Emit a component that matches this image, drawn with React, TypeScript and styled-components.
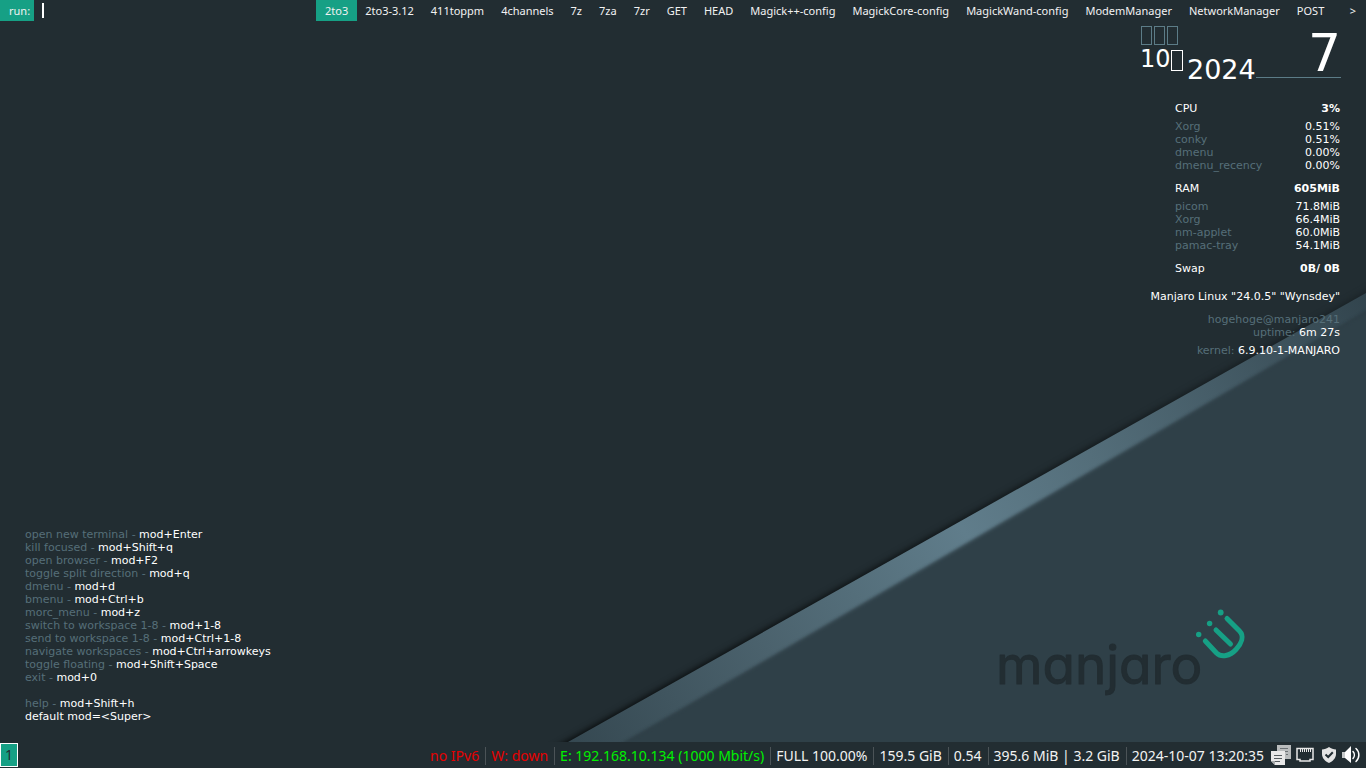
import React from "react";
import styled, { createGlobalStyle } from "styled-components";

const GlobalStyle = createGlobalStyle`
  * { box-sizing: border-box; }
  body {
    margin: 0;
    background: #222d32;
    color: #ffffff;
    font-family: "DejaVu Sans", sans-serif;
  }
`;

const Screen = styled.div`
  display: flex;
  flex-direction: column;
  min-height: 100vh;
  overflow: hidden;
`;

/* Launcher bar */
const Launcher = styled.form`
  position: relative;
  display: flex;
  height: 21px;
  background: #222d32;
  font: 11px/21px "Noto Sans", sans-serif;
  color: #f2f2f2;
`;

const Prompt = styled.label`
  width: 34px;
  padding-left: 9px;
  background: #16a085;
`;

const CommandInput = styled.input`
  width: 282px;
  padding: 0 7px;
  border: 0;
  outline: 0;
  background: transparent;
  color: inherit;
  font: inherit;
  caret-color: transparent;
`;

const Caret = styled.span`
  position: absolute;
  left: 42px;
  top: 3px;
  width: 2px;
  height: 15px;
  background: #ffffff;
`;

const Matches = styled.div`
  display: flex;
  flex: 1;
  overflow: hidden;
`;

const Match = styled.button<{ $active?: boolean }>`
  padding: 0 9px 0 ${(p) => (p.$active ? 9 : 8)}px;
  border: 0;
  background: ${(p) => (p.$active ? "#16a085" : "transparent")};
  color: inherit;
  font: inherit;
  white-space: nowrap;
`;

const More = styled(Match)`
  margin-left: auto;
  padding-right: 10px;
`;

/* Desktop */
const Desktop = styled.main`
  position: relative;
  flex: 1;
  display: flex;
  justify-content: space-between;
  padding: 5px 25px 19px;
  font-size: 11px;
  line-height: 13px;
`;

const Wallpaper = styled.svg`
  position: absolute;
  inset: 0;
  width: 100%;
  height: 100%;
`;

const Wordmark = styled.text`
  font: 400 53px Inter, sans-serif;
  font-feature-settings: "cv11";
  fill: #222d32;
  stroke: #222d32;
  stroke-width: 1px;
  stroke-linejoin: round;
`;

const Shortcuts = styled.ul`
  position: relative;
  align-self: flex-end;
  margin: 0;
  padding: 0;
  list-style: none;
`;

const Shortcut = styled.li<{ $spaced?: boolean }>`
  margin-top: ${(p) => (p.$spaced ? 13 : 0)}px;
  white-space: pre;
`;

const Dim = styled.span`
  color: #566f79;
`;

const Monitor = styled.aside`
  position: relative;
  width: 201px;
`;

const DateBlock = styled.header`
  display: flex;
  height: 52px;
  margin-bottom: 24px;
`;

const MonthColumn = styled.div`
  width: 47px;
`;

const Glyphs = styled.div`
  display: flex;
  gap: 2px;
  padding-left: 1px;
`;

const MissingGlyph = styled.span<{ $large?: boolean }>`
  width: ${(p) => (p.$large ? 12 : 11)}px;
  height: ${(p) => (p.$large ? 21 : 19)}px;
  border: 1px solid ${(p) => (p.$large ? "#ffffff" : "#5c7c87")};
`;

const Month = styled.div`
  display: flex;
  align-items: flex-end;
  margin-top: 2px;
  font-size: 24px;
  line-height: 24px;
`;

const Year = styled.span`
  align-self: flex-end;
  font-size: 27px;
  line-height: 28px;
  margin-bottom: -6px;
`;

const Day = styled.span`
  flex: 1;
  border-bottom: 1px solid #5c7c87;
  font-size: 52px;
  line-height: 54px;
  text-align: right;
`;

const Stats = styled.table`
  width: 166px;
  margin: 0 0 10px auto;
  padding-right: 1px;
  border-spacing: 0;

  th, td { padding: 0; }
  th { text-align: left; font-weight: 400; }
  td { text-align: right; }
  thead td { font-weight: 700; }
`;

const Heading = styled.tr<{ $rows: boolean }>`
  && > * { padding-bottom: ${(p) => (p.$rows ? 5 : 0)}px; }
`;

const Line = styled.div<{ $gap?: number }>`
  margin-top: ${(p) => p.$gap || 0}px;
  padding-right: 1px;
  text-align: right;
  white-space: nowrap;
`;

/* Status bar */
const StatusBar = styled.footer`
  position: relative;
  display: flex;
  align-items: center;
  height: 26px;
  background: #222d32;
  color: #f2f3f2;
  font: 14px/26px "Noto Sans", sans-serif;
`;

const Workspace = styled.button`
  width: 18px;
  height: 24px;
  padding: 0;
  border: 1px solid #ffffff;
  background: #16a085;
  color: #222d32;
  font: inherit;
  line-height: 22px;
`;

const Blocks = styled.div`
  display: flex;
  align-items: center;
  margin-left: auto;
  padding: 2px 1px 0 0;
  white-space: nowrap;
`;

const Block = styled.span<{ $color?: string }>`
  padding: 0 6px 0 5px;
  line-height: 18px;
  color: ${(p) => p.$color || "inherit"};
  & + & { border-left: 1px solid #4b5357; }
`;

const Tray = styled.div`
  display: flex;
  align-items: center;
  gap: 4px;
  padding-right: 5px;
`;

const matches = [
  "2to3", "2to3-3.12", "411toppm", "4channels", "7z", "7za", "7zr", "GET", "HEAD",
  "Magick++-config", "MagickCore-config", "MagickWand-config", "ModemManager",
  "NetworkManager", "POST",
];

const shortcuts = [
  ["open new terminal", "mod+Enter"],
  ["kill focused", "mod+Shift+q"],
  ["open browser", "mod+F2"],
  ["toggle split direction", "mod+q"],
  ["dmenu", "mod+d"],
  ["bmenu", "mod+Ctrl+b"],
  ["morc_menu", "mod+z"],
  ["switch to workspace 1-8", "mod+1-8"],
  ["send to workspace 1-8", "mod+Ctrl+1-8"],
  ["navigate workspaces", "mod+Ctrl+arrowkeys"],
  ["toggle floating", "mod+Shift+Space"],
  ["exit", "mod+0"],
  ["help", "mod+Shift+h"],
];

const stats = [
  { name: "CPU", value: "3%", rows: [["Xorg", "0.51%"], ["conky", "0.51%"], ["dmenu", "0.00%"], ["dmenu_recency", "0.00%"]] },
  { name: "RAM", value: "605MiB", rows: [["picom", "71.8MiB"], ["Xorg", "66.4MiB"], ["nm-applet", "60.0MiB"], ["pamac-tray", "54.1MiB"]] },
  { name: "Swap", value: "0B/ 0B", rows: [] },
];

const blocks = [
  { text: "no IPv6", color: "#e60000" },
  { text: "W: down", color: "#e60000" },
  { text: "E: 192.168.10.134 (1000 Mbit/s)", color: "#00f000" },
  { text: "FULL 100.00%" },
  { text: "159.5 GiB" },
  { text: "0.54" },
  { text: "395.6 MiB | 3.2 GiB" },
  { text: "2024-10-07 13:20:35" },
];

function Background() {
  return (
    <Wallpaper viewBox="0 21 1366 721" preserveAspectRatio="xMaxYMax slice">
      <defs>
        <linearGradient id="band" gradientUnits="userSpaceOnUse" x1="568" y1="742" x2="1366" y2="293">
          <stop offset="0" stopColor="#354851" />
          <stop offset="0.24" stopColor="#4b626d" />
          <stop offset="0.35" stopColor="#546e7a" />
          <stop offset="0.49" stopColor="#607d8b" />
          <stop offset="0.65" stopColor="#546e7a" />
          <stop offset="0.8" stopColor="#465d68" />
          <stop offset="1" stopColor="#32444d" />
        </linearGradient>
        <linearGradient id="shade" gradientUnits="userSpaceOnUse" x1="568" y1="742" x2="1366" y2="293">
          <stop offset="0" stopColor="#080b0c" />
          <stop offset="0.5" stopColor="#0e1315" />
          <stop offset="1" stopColor="#1a2226" />
        </linearGradient>
        <filter id="soft" x="-5%" y="-5%" width="110%" height="110%" colorInterpolationFilters="sRGB">
          <feGaussianBlur stdDeviation="3" />
        </filter>
        <filter id="edge" x="-5%" y="-5%" width="110%" height="110%" colorInterpolationFilters="sRGB">
          <feGaussianBlur stdDeviation="1.5" />
        </filter>
        <clipPath id="corner">
          <path d="M568 742 1366 293V742Z" />
        </clipPath>
      </defs>
      <path d="M0 0H1366V742H0Z" fill="#222d32" />
      <path d="M547 752 1384 281V310L585 760Z" fill="url(#shade)" filter="url(#soft)" />
      <path d="M568 742 1366 293V742Z" fill="url(#band)" />
      <g clipPath="url(#corner)">
        <path d="M617 746 1376 305V780H600Z" fill="#2a373e" opacity="0.6" filter="url(#edge)" />
        <path d="M621 746 1376 307V780H600Z" fill="#2f4048" filter="url(#edge)" />
      </g>
      <Wordmark x="996" y="684">manjaro</Wordmark>
      <g stroke="#16a085" strokeWidth="5" strokeLinecap="round" fill="none">
        <path d="M1227 618.5 1239.5 631C1244.500 636 1241.500 643.500 1236 649.500C1230 656 1221.500 658 1216.500 653L1205.300 641" />
        <path d="M1216 630 1230.500 644" />
      </g>
      <g fill="#16a085">
        <circle cx="1220.700" cy="612.500" r="2.900" />
        <circle cx="1209.600" cy="623.500" r="2.700" />
        <circle cx="1198.700" cy="634.500" r="2.700" />
      </g>
    </Wallpaper>
  );
}

function TrayIcons() {
  return (
    <Tray>
      <svg width="20" height="20" viewBox="0 0 20 20" aria-label="Clipboard">
        <path d="M6 0H20V14H6Z" fill="#b9bcbd" />
        <path d="M9 3.500H17M9 6.500H17M15 9.500H17" stroke="#6b7174" />
        <path d="M0 6H14V20H4L0 16Z" fill="#e8e8e8" />
        <path d="M3 10.500H11M3 13.500H11M3 16.500H9" stroke="#555c5f" />
        <path d="M0 16H4V20Z" fill="#a5a9aa" />
      </svg>
      <svg width="22" height="20" viewBox="0 0 22 20" aria-label="Wired network">
        <path d="M2 3.500H18V14.500H15V16H5V14.500H2Z" fill="none" stroke="#e8e8e8" strokeWidth="1.500" />
        <path d="M5.500 4V7M7.500 4V7M9.500 4V7M11.500 4V7M13.500 4V7M15.500 4V7" stroke="#e8e8e8" />
      </svg>
      <svg width="16" height="20" viewBox="0 0 16 20" aria-label="Updates">
        <path d="M8 2C10 3.500 12.500 4.200 15 4.500V9C15 13 12 16.200 8 18C4 16.200 1 13 1 9V4.500C3.500 4.200 6 3.500 8 2Z" fill="#e4e4e4" />
        <path d="M4.500 9.500 7.200 12 11.800 7.200" fill="none" stroke="#222d32" strokeWidth="2" />
      </svg>
      <svg width="20" height="20" viewBox="0 0 20 20" aria-label="Volume">
        <path d="M1 7H4L10 1V18L4 13H1Z" fill="#ffffff" />
        <path d="M1 7H4V13H1Z" fill="#c6c9ca" />
        <path d="M12 6.500C13.800 8.500 13.800 11.500 12 13.500M15 3.500C18.800 7 18.800 13 15 16.500" fill="none" stroke="#ffffff" strokeWidth="1.500" strokeLinecap="round" />
      </svg>
    </Tray>
  );
}

export default function App() {
  return (
    <Screen>
      <GlobalStyle />
      <Launcher>
        <Prompt htmlFor="command">run:</Prompt>
        <CommandInput id="command" />
        <Caret />
        <Matches>
          {matches.map((name, i) => (
            <Match key={name} type="button" $active={i === 0}>{name}</Match>
          ))}
          <More type="button">&gt;</More>
        </Matches>
      </Launcher>

      <Desktop>
        <Background />
        <Shortcuts>
          {shortcuts.map(([action, keys]) => (
            <Shortcut key={action} $spaced={action === "help"}>
              <Dim>{action} - </Dim>{keys}
            </Shortcut>
          ))}
          <Shortcut>default mod=&lt;Super&gt;</Shortcut>
        </Shortcuts>

        <Monitor>
          <DateBlock>
            <MonthColumn>
              <Glyphs><MissingGlyph /><MissingGlyph /><MissingGlyph /></Glyphs>
              <Month>10<MissingGlyph $large /></Month>
            </MonthColumn>
            <Year>2024</Year>
            <Day>7</Day>
          </DateBlock>
          {stats.map((group) => (
            <Stats key={group.name}>
              <thead>
                <Heading $rows={group.rows.length > 0}>
                  <th>{group.name}</th>
                  <td>{group.value}</td>
                </Heading>
              </thead>
              <tbody>
                {group.rows.map(([name, value]) => (
                  <tr key={name}>
                    <th><Dim>{name}</Dim></th>
                    <td>{value}</td>
                  </tr>
                ))}
              </tbody>
            </Stats>
          ))}
          <Line $gap={15}>Manjaro Linux "24.0.5" "Wynsdey"</Line>
          <Line $gap={10}><Dim>hogehoge@manjaro241</Dim></Line>
          <Line><Dim>uptime:</Dim> 6m 27s</Line>
          <Line $gap={5}><Dim>kernel:</Dim> 6.9.10-1-MANJARO</Line>
        </Monitor>
      </Desktop>

      <StatusBar>
        <Workspace>1</Workspace>
        <Blocks>
          {blocks.map((b) => (
            <Block key={b.text} $color={b.color}>{b.text}</Block>
          ))}
        </Blocks>
        <TrayIcons />
      </StatusBar>
    </Screen>
  );
}
